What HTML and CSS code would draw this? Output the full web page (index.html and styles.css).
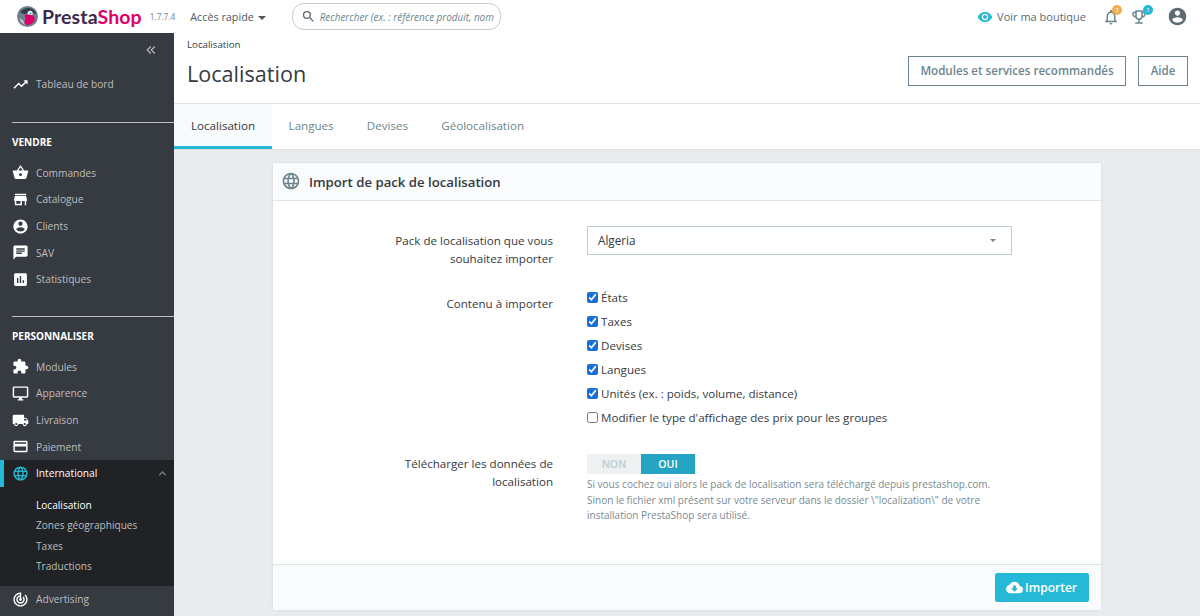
FILE: index.html
```html
<!DOCTYPE html>
<html lang="fr">
<head>
    <meta charset="UTF-8">
    <title>Localisation • PrestaShop</title>
    <link rel="stylesheet" href="styles.css">
</head>
<body>
    <header class="topbar">
        <div class="logo">
            <svg class="logo-mark" viewBox="0 0 20 20">
                <circle cx="10" cy="10" r="10" fill="#6f7f8c"/>
                <path d="M3 6c3-4 8-5 12-3 2 1 3 3 3 5-3-2-5-2-7-1-3 1-5 1-8-1z" fill="#33414d"/>
                <circle cx="12.5" cy="7" r="2.4" fill="#fff"/>
                <circle cx="13" cy="7" r="1" fill="#25b9d7"/>
                <path d="M7 9c4-2 9-1 10 3 0 3-3 6-7 6-2 0-3-1-3-3 1-2 2-3 0-6z" fill="#df0067"/>
                <path d="M2.5 12c1 3 3 5 5 6-1-3-2-5-5-6z" fill="#c9d3da"/>
            </svg>
            <span class="logo-text"><b>Presta</b><i>Shop</i></span>
        </div>
        <span class="version">1.7.7.4</span>
        <div class="quick">Accès rapide <span class="caret"></span></div>
        <div class="search">
            <svg class="search-icon" viewBox="0 0 24 24"><path d="M15.5 14h-.79l-.28-.27A6.47 6.47 0 0 0 16 9.5 6.5 6.5 0 1 0 9.5 16c1.61 0 3.09-.59 4.23-1.57l.27.28v.79l5 4.99L20.49 19l-4.99-5zm-6 0C7.01 14 5 11.99 5 9.5S7.01 5 9.5 5 14 7.01 14 9.5 11.99 14 9.5 14z"/></svg>
            <span class="search-text">Rechercher (ex. : référence produit, nom</span>
        </div>
        <div class="top-right">
            <svg class="eye" viewBox="0 0 24 24"><path d="M12 4.5C7 4.5 2.73 7.61 1 12c1.73 4.39 6 7.5 11 7.5s9.27-3.11 11-7.5c-1.73-4.39-6-7.5-11-7.5zM12 17c-2.76 0-5-2.24-5-5s2.24-5 5-5 5 2.24 5 5-2.24 5-5 5zm0-8c-1.66 0-3 1.34-3 3s1.34 3 3 3 3-1.34 3-3-1.34-3-3-3z"/></svg>
            <span class="shop-link">Voir ma boutique</span>
            <div class="notif">
                <svg viewBox="0 0 24 24"><path d="M12 22c1.1 0 2-.9 2-2h-4c0 1.1.89 2 2 2zm6-6v-5c0-3.07-1.64-5.64-4.5-6.32V4c0-.83-.67-1.5-1.5-1.5s-1.5.67-1.5 1.5v.68C7.63 5.36 6 7.92 6 11v5l-2 2v1h16v-1l-2-2zm-2 1H8v-6c0-2.48 1.51-4.5 4-4.5s4 2.02 4 4.5v6z"/></svg>
                <span class="badge badge-orange">3</span>
            </div>
            <div class="notif notif-trophy">
                <svg viewBox="0 0 24 24"><path fill-rule="evenodd" d="M19 5h-2V3H7v2H5c-1.1 0-2 .9-2 2v1c0 2.55 1.92 4.63 4.39 4.94.63 1.5 1.98 2.63 3.61 2.96V19H7v2h10v-2h-4v-3.1c1.63-.33 2.98-1.46 3.61-2.96C19.08 12.63 21 10.55 21 8V7c0-1.1-.9-2-2-2zM5 8V7h2v3.82C5.84 10.4 5 9.3 5 8zm14 0c0 1.3-.84 2.4-2 2.82V7h2v1zM9 5v6c0 1.65 1.35 3 3 3s3-1.35 3-3V5H9z"/></svg>
                <span class="badge badge-blue">1</span>
            </div>
            <svg class="account" viewBox="0 0 24 24"><path d="M12 2C6.48 2 2 6.48 2 12s4.48 10 10 10 10-4.48 10-10S17.52 2 12 2zm0 3c1.66 0 3 1.34 3 3s-1.34 3-3 3-3-1.34-3-3 1.34-3 3-3zm0 14.2c-2.5 0-4.71-1.28-6-3.22.03-1.99 4-3.08 6-3.08 1.99 0 5.97 1.09 6 3.08-1.29 1.94-3.5 3.22-6 3.22z"/></svg>
        </div>
    </header>

    <div class="layout">
        <nav class="sidebar">
            <div class="collapse">
                <svg viewBox="0 0 24 24"><path d="M11.5 6 5.5 12l6 6M18.5 6l-6 6 6 6"/></svg>
            </div>
            <a class="item item-first">
                <svg viewBox="0 0 24 24"><path d="M16 6l2.29 2.29-4.88 4.88-4-4L2 16.59 3.41 18l6-6 4 4 6.3-6.29L22 12V6z"/></svg>
                Tableau de bord
            </a>
            <div class="section">VENDRE</div>
            <a class="item">
                <svg viewBox="0 0 24 24"><path d="M17.21 9l-4.38-6.56c-.19-.28-.51-.42-.83-.42-.32 0-.64.14-.83.43L6.79 9H2c-.55 0-1 .45-1 1 0 .09.01.18.04.27l2.54 9.27c.23.84 1 1.46 1.92 1.46h13c.92 0 1.69-.62 1.93-1.46l2.54-9.27L23 10c0-.55-.45-1-1-1h-4.79zM9 9l3-4.4L15 9H9zm3 8c-1.1 0-2-.9-2-2s.9-2 2-2 2 .9 2 2-.9 2-2 2z"/></svg>
                Commandes
            </a>
            <a class="item">
                <svg viewBox="0 0 24 24"><path d="M20 4H4v2h16V4zm1 10v-2l-1-5H4l-1 5v2h1v6h10v-6h4v6h2v-6h1zm-9 4H6v-4h6v4z"/></svg>
                Catalogue
            </a>
            <a class="item">
                <svg viewBox="0 0 24 24"><path d="M12 2C6.48 2 2 6.48 2 12s4.48 10 10 10 10-4.48 10-10S17.52 2 12 2zm0 3c1.66 0 3 1.34 3 3s-1.34 3-3 3-3-1.34-3-3 1.34-3 3-3zm0 14.2c-2.5 0-4.71-1.28-6-3.22.03-1.99 4-3.08 6-3.08 1.99 0 5.97 1.09 6 3.08-1.29 1.94-3.5 3.22-6 3.22z"/></svg>
                Clients
            </a>
            <a class="item">
                <svg viewBox="0 0 24 24"><path d="M20 2H4c-1.1 0-1.99.9-1.99 2L2 22l4-4h14c1.1 0 2-.9 2-2V4c0-1.1-.9-2-2-2zM6 9h12v2H6V9zm8 5H6v-2h8v2zm4-6H6V6h12v2z"/></svg>
                SAV
            </a>
            <a class="item">
                <svg viewBox="0 0 24 24"><path d="M19 3H5c-1.1 0-2 .9-2 2v14c0 1.1.9 2 2 2h14c1.1 0 2-.9 2-2V5c0-1.1-.9-2-2-2zM9 17H7v-7h2v7zm4 0h-2V7h2v10zm4 0h-2v-4h2v4z"/></svg>
                Statistiques
            </a>
            <div class="section section-second">PERSONNALISER</div>
            <a class="item">
                <svg viewBox="0 0 24 24"><path d="M20.5 11H19V7c0-1.1-.9-2-2-2h-4V3.5C13 2.12 11.88 1 10.5 1S8 2.12 8 3.5V5H4c-1.1 0-1.99.9-1.99 2v3.8H3.5c1.49 0 2.7 1.21 2.7 2.7s-1.21 2.7-2.7 2.7H2V20c0 1.1.9 2 2 2h3.8v-1.5c0-1.49 1.21-2.7 2.7-2.7 1.49 0 2.7 1.21 2.7 2.7V22H17c1.1 0 2-.9 2-2v-4h1.5c1.38 0 2.5-1.12 2.5-2.5S21.88 11 20.5 11z"/></svg>
                Modules
            </a>
            <a class="item">
                <svg viewBox="0 0 24 24"><path d="M21 2H3c-1.1 0-2 .9-2 2v12c0 1.1.9 2 2 2h7v2H8v2h8v-2h-2v-2h7c1.1 0 2-.9 2-2V4c0-1.1-.9-2-2-2zm0 14H3V4h18v12z"/></svg>
                Apparence
            </a>
            <a class="item">
                <svg viewBox="0 0 24 24"><path d="M20 8h-3V4H3c-1.1 0-2 .9-2 2v11h2c0 1.66 1.34 3 3 3s3-1.34 3-3h6c0 1.66 1.34 3 3 3s3-1.34 3-3h2v-5l-3-4zM6 18.5c-.83 0-1.5-.67-1.5-1.5s.67-1.5 1.5-1.5 1.5.67 1.5 1.5-.67 1.5-1.5 1.5zm13.5-9l1.96 2.5H17V9.5h2.5zm-1.5 9c-.83 0-1.5-.67-1.5-1.5s.67-1.5 1.5-1.5 1.5.67 1.5 1.5-.67 1.5-1.5 1.5z"/></svg>
                Livraison
            </a>
            <a class="item">
                <svg viewBox="0 0 24 24"><path d="M20 4H4c-1.11 0-1.99.89-1.99 2L2 18c0 1.11.89 2 2 2h16c1.11 0 2-.89 2-2V6c0-1.11-.89-2-2-2zm0 14H4v-6h16v6zm0-10H4V6h16v2z"/></svg>
                Paiement
            </a>
            <div class="open-group">
                <a class="item item-active">
                    <svg viewBox="0 0 24 24"><path d="M11.99 2C6.47 2 2 6.48 2 12s4.47 10 9.99 10C17.52 22 22 17.52 22 12S17.52 2 11.99 2zm6.93 6h-2.95c-.32-1.25-.78-2.45-1.38-3.56 1.84.63 3.37 1.91 4.33 3.56zM12 4.04c.83 1.2 1.48 2.53 1.91 3.96h-3.82c.43-1.43 1.08-2.76 1.91-3.96zM4.26 14C4.1 13.36 4 12.69 4 12s.1-1.36.26-2h3.38c-.08.66-.14 1.32-.14 2 0 .68.06 1.34.14 2H4.26zm.82 2h2.95c.32 1.25.78 2.45 1.38 3.56-1.84-.63-3.37-1.9-4.33-3.56zm2.95-8H5.08c.96-1.66 2.49-2.93 4.33-3.56C8.81 5.55 8.35 6.75 8.03 8zM12 19.96c-.83-1.2-1.48-2.53-1.91-3.96h3.82c-.43 1.43-1.08 2.76-1.91 3.96zM14.34 14H9.66c-.09-.66-.16-1.32-.16-2 0-.68.07-1.35.16-2h4.68c.09.65.16 1.32.16 2 0 .68-.07 1.34-.16 2zm.25 5.56c.6-1.11 1.06-2.31 1.38-3.56h2.95c-.96 1.65-2.49 2.93-4.33 3.56zM16.36 14c.08-.66.14-1.32.14-2 0-.68-.06-1.34-.14-2h3.38c.16.64.26 1.31.26 2s-.1 1.36-.26 2h-3.38z"/></svg>
                    International
                    <svg class="chevron" viewBox="0 0 24 24"><path d="M7.41 15.41 12 10.83l4.59 4.58L18 14l-6-6-6 6z"/></svg>
                </a>
                <ul class="submenu">
                    <li class="sub-current">Localisation</li>
                    <li>Zones géographiques</li>
                    <li>Taxes</li>
                    <li>Traductions</li>
                </ul>
            </div>
            <a class="item">
                <svg viewBox="0 0 24 24"><path d="M19.07 4.93l-1.41 1.41C19.1 7.79 20 9.79 20 12c0 4.42-3.58 8-8 8s-8-3.58-8-8c0-4.08 3.05-7.44 7-7.93v2.02C8.16 6.57 6 9.03 6 12c0 3.31 2.69 6 6 6s6-2.69 6-6c0-1.66-.67-3.16-1.76-4.24l-1.41 1.41C15.55 9.9 16 10.9 16 12c0 2.21-1.79 4-4 4s-4-1.79-4-4c0-1.86 1.28-3.41 3-3.86v2.14c-.6.35-1 .98-1 1.72 0 1.1.9 2 2 2s2-.9 2-2c0-.74-.4-1.38-1-1.72V2h-1C6.48 2 2 6.48 2 12s4.48 10 10 10 10-4.48 10-10c0-2.76-1.12-5.26-2.93-7.07z"/></svg>
                Advertising
            </a>
        </nav>

        <main class="main">
            <div class="page-head">
                <div>
                    <div class="crumb">Localisation</div>
                    <h1>Localisation</h1>
                </div>
                <div class="head-buttons">
                    <a class="btn-outline">Modules et services recommandés</a>
                    <a class="btn-outline">Aide</a>
                </div>
            </div>
            <div class="tabs">
                <a class="tab tab-active">Localisation</a>
                <a class="tab">Langues</a>
                <a class="tab">Devises</a>
                <a class="tab">Géolocalisation</a>
            </div>
            <div class="content">
                <section class="card">
                    <div class="card-head">
                        <svg viewBox="0 0 24 24"><path d="M11.99 2C6.47 2 2 6.48 2 12s4.47 10 9.99 10C17.52 22 22 17.52 22 12S17.52 2 11.99 2zm6.93 6h-2.95c-.32-1.25-.78-2.45-1.38-3.56 1.84.63 3.37 1.91 4.33 3.56zM12 4.04c.83 1.2 1.48 2.53 1.91 3.96h-3.82c.43-1.43 1.08-2.76 1.91-3.96zM4.26 14C4.1 13.36 4 12.69 4 12s.1-1.36.26-2h3.38c-.08.66-.14 1.32-.14 2 0 .68.06 1.34.14 2H4.26zm.82 2h2.95c.32 1.25.78 2.45 1.38 3.56-1.84-.63-3.37-1.9-4.33-3.56zm2.95-8H5.08c.96-1.66 2.49-2.93 4.33-3.56C8.81 5.55 8.35 6.75 8.03 8zM12 19.96c-.83-1.2-1.48-2.53-1.91-3.96h3.82c-.43 1.43-1.08 2.76-1.91 3.96zM14.34 14H9.66c-.09-.66-.16-1.32-.16-2 0-.68.07-1.35.16-2h4.68c.09.65.16 1.32.16 2 0 .68-.07 1.34-.16 2zm.25 5.56c.6-1.11 1.06-2.31 1.38-3.56h2.95c-.96 1.65-2.49 2.93-4.33 3.56zM16.36 14c.08-.66.14-1.32.14-2 0-.68-.06-1.34-.14-2h3.38c.16.64.26 1.31.26 2s-.1 1.36-.26 2h-3.38z"/></svg>
                        Import de pack de localisation
                    </div>
                    <div class="card-body">
                        <div class="form-row row-pack">
                            <label class="form-label">Pack de localisation que vous souhaitez importer</label>
                            <div class="select">Algeria <span class="caret"></span></div>
                        </div>
                        <div class="form-row row-content">
                            <label class="form-label">Contenu à importer</label>
                            <div class="checks">
                                <label class="check"><input type="checkbox" checked>États</label>
                                <label class="check"><input type="checkbox" checked>Taxes</label>
                                <label class="check"><input type="checkbox" checked>Devises</label>
                                <label class="check"><input type="checkbox" checked>Langues</label>
                                <label class="check"><input type="checkbox" checked>Unités (ex. : poids, volume, distance)</label>
                                <label class="check"><input type="checkbox">Modifier le type d'affichage des prix pour les groupes</label>
                            </div>
                        </div>
                        <div class="form-row row-download">
                            <label class="form-label">Télécharger les données de localisation</label>
                            <div>
                                <div class="switch">
                                    <span class="switch-off">NON</span>
                                    <span class="switch-on">OUI</span>
                                </div>
                                <p class="help">Si vous cochez oui alors le pack de localisation sera téléchargé depuis prestashop.com.<br>Sinon le fichier xml présent sur votre serveur dans le dossier \"localization\" de votre<br>installation PrestaShop sera utilisé.</p>
                            </div>
                        </div>
                    </div>
                    <div class="card-foot">
                        <button class="btn-primary">
                            <svg viewBox="0 0 24 24"><path d="M19.35 10.04C18.67 6.59 15.64 4 12 4 9.11 4 6.6 5.64 5.35 8.04 2.34 8.36 0 10.91 0 14c0 3.31 2.69 6 6 6h13c2.76 0 5-2.24 5-5 0-2.64-2.05-4.78-4.65-4.96zM17 13l-5 5-5-5h3V9h4v4h3z"/></svg>
                            Importer
                        </button>
                    </div>
                </section>
            </div>
        </main>
    </div>
</body>
</html>
```

FILE: styles.css
```css
/* General Styling */
* {
    box-sizing: border-box;
}

html, body {
    height: 616px;
    margin: 0;
    overflow: hidden;
}

body {
    font-family: 'Open Sans', sans-serif;
    font-size: 12px;
    color: #363a41;
    background: #eaebec;
}

.caret {
    display: inline-block;
    width: 0;
    height: 0;
    border-left: 4px solid transparent;
    border-right: 4px solid transparent;
    border-top: 4px solid #6c868e;
    vertical-align: middle;
}

/* Top bar */
.topbar {
    display: flex;
    align-items: center;
    height: 33px;
    padding: 0 12px 0 17px;
    background: #fff;
}

.logo {
    display: flex;
    align-items: center;
    gap: 4px;
}

.logo-mark {
    width: 21px;
    height: 21px;
}

.logo-text {
    font-family: 'Lato', sans-serif;
    font-size: 19.5px;
    letter-spacing: 0.1px;
    line-height: 1;
}

.logo-text b {
    font-weight: 700;
    color: #3b2a4d;
}

.logo-text i {
    font-style: normal;
    font-weight: 700;
    color: #df0067;
}

.version {
    margin-left: 8px;
    font-size: 8.3px;
    color: #6c868e;
}

.quick {
    margin-left: 15px;
    font-size: 10.8px;
    color: #4d5a60;
    white-space: nowrap;
}

.quick .caret {
    margin-left: 1px;
    border-top-color: #4d5a60;
}

.search {
    display: flex;
    align-items: center;
    width: 209px;
    height: 27px;
    margin-left: 26px;
    padding: 0 8px;
    border: 1px solid #c5cdd1;
    border-radius: 12px;
    overflow: hidden;
}

.search-icon {
    flex: none;
    width: 15px;
    height: 15px;
    margin-right: 4px;
    fill: #5d6b72;
}

.search-text {
    font-size: 9.9px;
    font-style: italic;
    color: #6c868e;
    white-space: nowrap;
}

.top-right {
    display: flex;
    align-items: center;
    margin-left: auto;
}

.eye {
    width: 16px;
    height: 16px;
    fill: #25b9d7;
}

.shop-link {
    margin-left: 4px;
    font-size: 11px;
    color: #5d6b72;
}

.notif {
    position: relative;
    width: 18px;
    height: 18px;
    margin-left: 15.5px;
}

.notif svg {
    width: 18px;
    height: 18px;
    fill: #6c868e;
}

.notif-trophy {
    margin-left: 10.5px;
}

.badge {
    position: absolute;
    top: -2.5px;
    right: -2.5px;
    width: 10px;
    height: 10px;
    border-radius: 50%;
    font-size: 6px;
    line-height: 10px;
    text-align: center;
    color: #fff;
}

.badge-orange {
    background: #f0ad4e;
}

.badge-blue {
    right: -5px;
    background: #25b9d7;
}

.account {
    width: 21px;
    height: 21px;
    margin-left: 19px;
    fill: #5d6b72;
}

/* Layout */
.layout {
    display: flex;
    height: 583px;
}

/* Sidebar */
.sidebar {
    flex: none;
    width: 174px;
    padding-top: 10px;
    background: #363a41;
    overflow: hidden;
}

.collapse {
    display: flex;
    justify-content: flex-end;
    height: 14px;
    padding-right: 16px;
}

.collapse svg {
    width: 14px;
    height: 14px;
    fill: none;
    stroke: #bebebe;
    stroke-width: 2;
}

.item {
    display: flex;
    align-items: center;
    height: 26.6px;
    padding-left: 12px;
    font-size: 10.2px;
    color: #bebebe;
}

.item svg {
    flex: none;
    width: 17px;
    height: 17px;
    margin-right: 7px;
    fill: #fff;
}

.item-first {
    margin-top: 14px;
}

.section {
    margin: 24px 0 0 12px;
    padding-top: 12px;
    height: 38px;
    border-top: 1px solid #bebebe;
    font-size: 10px;
    font-weight: 700;
    color: #fff;
}

.section-second {
    margin-top: 23px;
}

.open-group {
    background: #202226;
}

.item-active {
    position: relative;
    color: #fff;
}

.item-active::before {
    content: "";
    position: absolute;
    left: 0;
    top: 0;
    bottom: 0;
    width: 4px;
    background: #25b9d7;
}

.item-active svg {
    fill: #25b9d7;
}

.item-active .chevron {
    width: 15px;
    height: 15px;
    margin: 0 4px 0 auto;
    fill: #6c868e;
}

.submenu {
    list-style: none;
    margin: 0;
    padding: 8.2px 0 9.5px 36px;
    font-size: 10.1px;
    color: #bebebe;
}

.submenu li {
    height: 20.4px;
    line-height: 20.4px;
}

.sub-current {
    color: #fff;
}

/* Main */
.main {
    flex: 1;
    min-width: 0;
}

.page-head {
    display: flex;
    justify-content: space-between;
    height: 71px;
    padding: 5px 12px 0 13px;
    background: #fff;
    border-bottom: 1px solid #dfdfdf;
}

.crumb {
    font-size: 9.7px;
    line-height: 13px;
    color: #363a41;
}

h1 {
    margin: 9px 0 0;
    font-size: 21.6px;
    font-weight: 400;
    line-height: 28px;
    color: #363a41;
}

.head-buttons {
    display: flex;
    gap: 12px;
    padding-top: 18px;
}

.btn-outline {
    height: 30px;
    padding: 0 11.5px;
    border: 1px solid #6c868e;
    font-size: 11.6px;
    font-weight: 600;
    line-height: 28px;
    color: #6c868e;
}

.tabs {
    display: flex;
    height: 46px;
    background: #fff;
    border-bottom: 1px solid #dfdfdf;
}

.tab {
    padding: 0 16.6px;
    font-size: 11.6px;
    line-height: 43px;
    color: #6c868e;
}

.tab-active {
    width: 98px;
    padding: 0 17px;
    background: #f7fbfc;
    border-bottom: 3px solid #25b9d7;
    color: #363a41;
}

.content {
    padding: 13px 99px 0;
}

.card {
    background: #fff;
    border-radius: 3px;
    box-shadow: 0 0 3px rgba(0, 0, 0, 0.1);
}

.card-head {
    display: flex;
    align-items: center;
    gap: 8px;
    height: 38px;
    padding: 1px 0 0 8px;
    background: #fafbfc;
    border-bottom: 1px solid #dbe6e9;
    font-size: 13.2px;
    font-weight: 600;
    color: #363a41;
}

.card-head svg {
    width: 20px;
    height: 20px;
    margin-top: -2px;
    fill: #6c868e;
}

.card-body {
    height: 363px;
    padding-top: 25px;
}

.form-row {
    display: grid;
    grid-template-columns: 280px 425px;
    column-gap: 34px;
}

.row-pack {
    height: 61px;
}

.row-content {
    height: 167px;
}

.form-label {
    padding: 6px 0 0 120px;
    font-size: 11.6px;
    line-height: 17.5px;
    text-align: right;
}

.row-content .form-label {
    padding-top: 8px;
}

.row-download .form-label {
    padding-top: 1px;
}

.select {
    display: flex;
    align-items: center;
    justify-content: space-between;
    height: 29px;
    padding: 0 15px 1px 10px;
    border: 1px solid #bbcdd2;
    font-size: 11.7px;
    color: #363a41;
}

.select .caret {
    border-left-width: 3.5px;
    border-right-width: 3.5px;
    border-top-width: 3.5px;
}

.checks {
    display: flex;
    flex-direction: column;
    margin-top: -2px;
}

.check {
    display: flex;
    align-items: center;
    height: 24px;
    font-size: 11.6px;
    white-space: nowrap;
}

.check input {
    width: 11px;
    height: 11px;
    margin: 0 3px 0 0;
    accent-color: #1a6fd8;
}

.switch {
    display: flex;
    width: 108px;
    height: 20px;
    font-size: 10.5px;
    font-weight: 600;
    line-height: 20px;
    text-align: center;
}

.switch span {
    flex: 1;
}

.switch-off {
    background: #eef1f2;
    color: #bbcdd2;
}

.switch-on {
    background: #25a5c4;
    color: #fff;
}

.help {
    margin: 3px 0 0;
    width: 425px;
    font-size: 10px;
    line-height: 15.5px;
    color: #7a8a8f;
    white-space: nowrap;
}

.card-foot {
    display: flex;
    justify-content: flex-end;
    align-items: center;
    height: 46px;
    padding-right: 12px;
    background: #fafbfc;
    border-top: 1px solid #dbe6e9;
}

.btn-primary {
    display: flex;
    align-items: center;
    gap: 2px;
    height: 29px;
    padding: 0 12px 0 11px;
    border: none;
    border-radius: 2px;
    background: #25b9d7;
    font-family: 'Open Sans', sans-serif;
    font-size: 12px;
    font-weight: 600;
    color: #fff;
}

.btn-primary svg {
    width: 17px;
    height: 17px;
    fill: #fff;
}
```
